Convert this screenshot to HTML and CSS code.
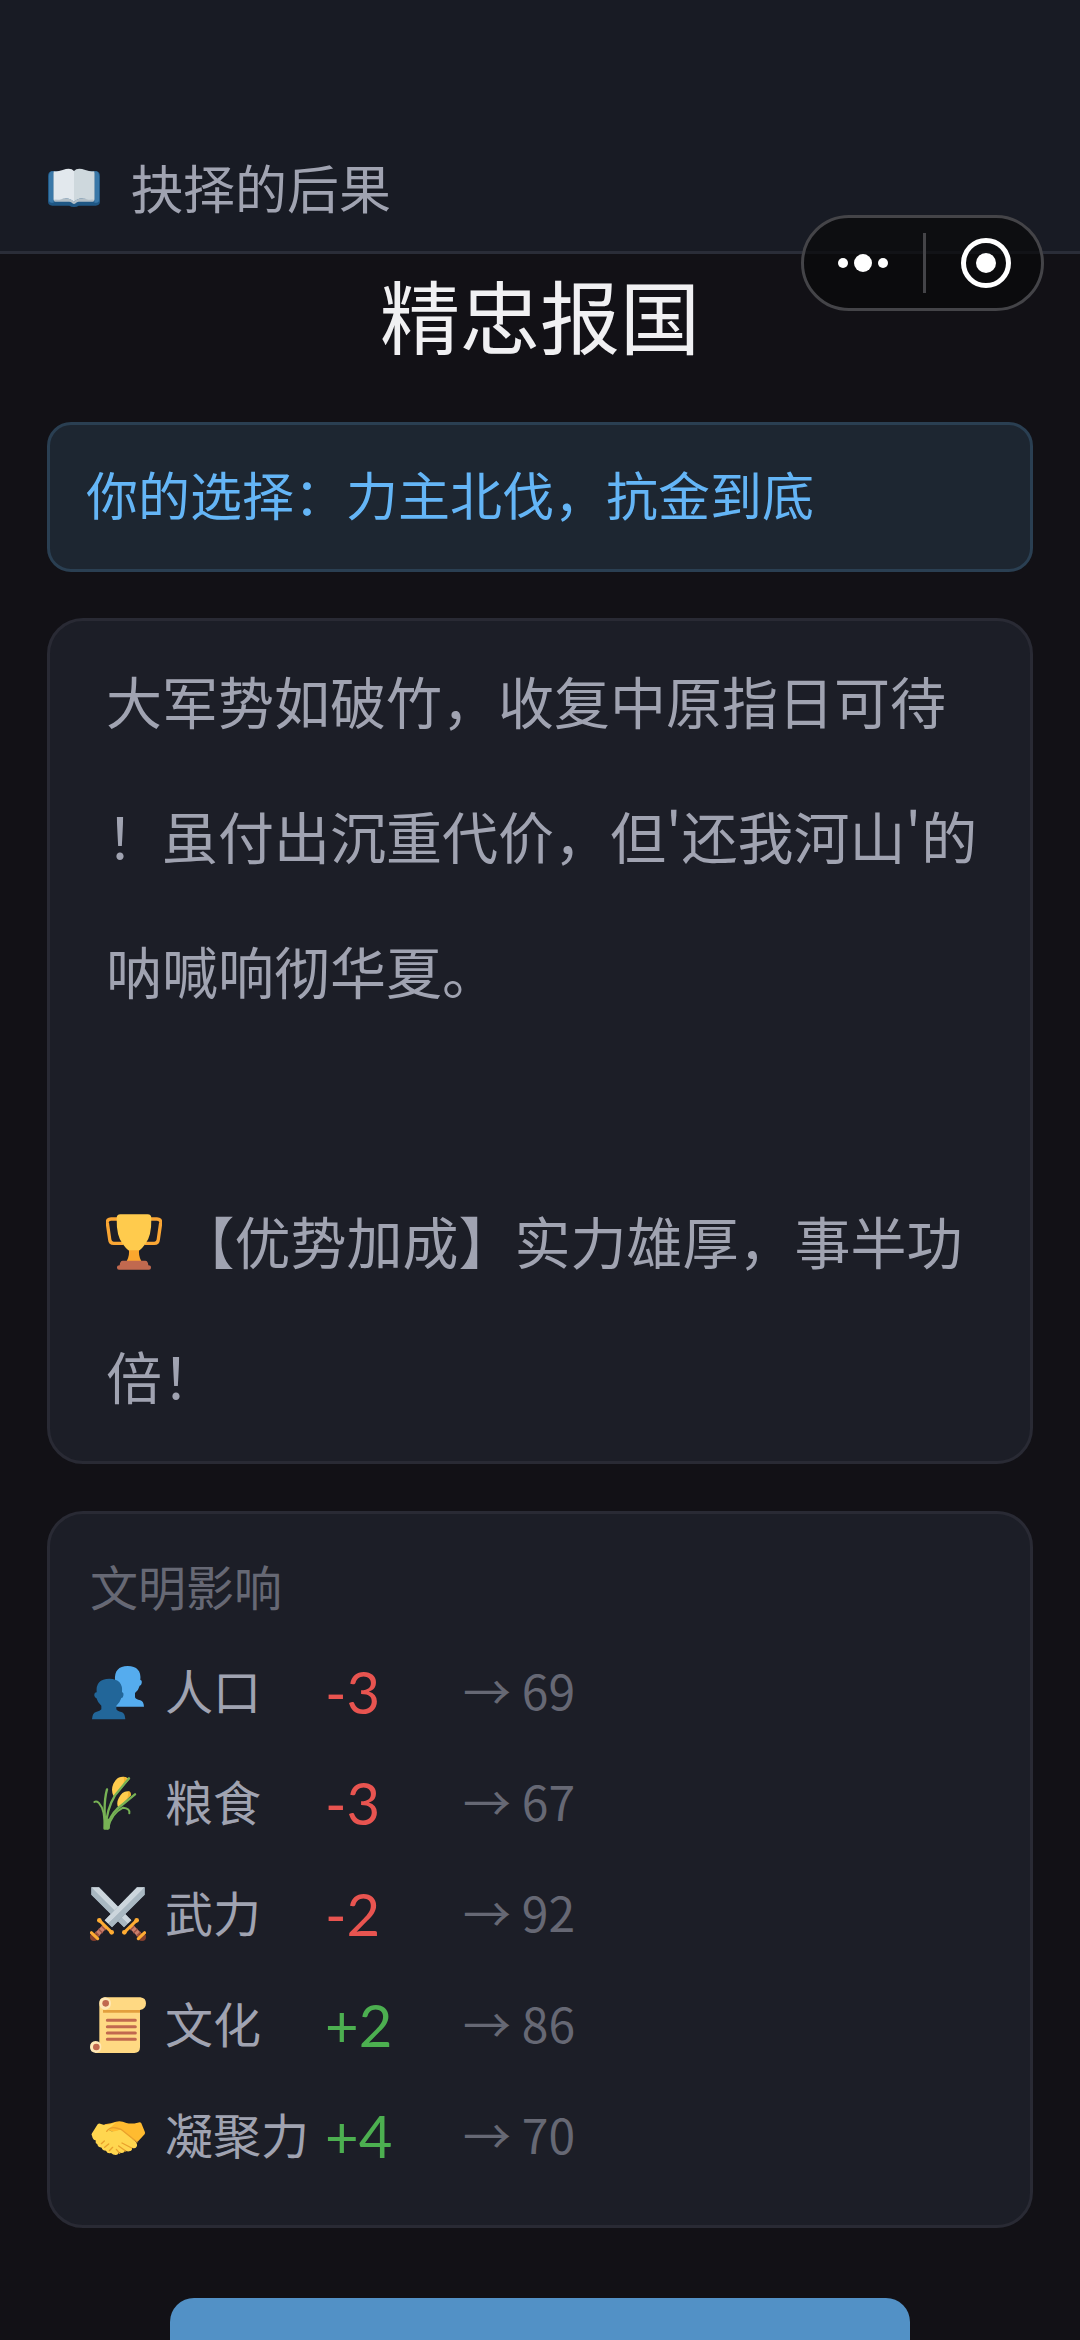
FILE: index.html
```html
<!DOCTYPE html>
<html lang="zh-CN">
  <head>
    <meta charset="UTF-8" />
    <meta name="viewport" content="width=device-width, initial-scale=1.0" />
    <title>抉择的后果</title>
    <link rel="stylesheet" href="styles.css">
  </head>
  <body>
    <header class="header">
      <svg class="header-icon" viewBox="144 93 156 156" aria-hidden="true">
        <path fill="#1f5784" d="M155 124h134q11 2 11 14v76q0 13-13 13h-51q-5 4-14 4t-14-4h-51q-13 0-13-13v-76q0-12 11-14z"/>
        <path fill="#3a78a8" d="M155 124h6v94h-6q-8 0-8-8v-72q0-12 8-14zM283 124h6q8 2 8 14v72q0 8-8 8h-6z"/>
        <path fill="#b3bfc7" d="M161 128l5-5v85l18-2q26-4 38 10 12-14 38-10l18 2v-85l5 5v83q0 4-5 4h-42q-6 0-9 5-5 4-10 0-3-5-9-5h-42q-5 0-5-4z"/>
        <path fill="#e2e8ed" d="M161 124q14 1 27-4 24-9 34 3v93q-14-14-33-10-15 5-28 3z"/>
        <path fill="#ced8dd" d="M283 124q-14 1-27-4-24-9-34 3v93q14-14 33-10 15 5 28 3z"/>
      </svg>
      <span>抉择的后果</span>
    </header>

    <!-- 右上角胶囊按钮 -->
    <div class="capsule">
      <button class="capsule-btn" aria-label="更多">
        <svg width="52" height="20" viewBox="0 0 52 20">
          <circle cx="6" cy="10" r="5"/><circle cx="26" cy="10" r="9"/><circle cx="46" cy="10" r="5"/>
        </svg>
      </button>
      <button class="capsule-btn" aria-label="关闭">
        <svg width="50" height="50" viewBox="0 0 50 50">
          <circle cx="25" cy="25" r="22.5" fill="none" stroke="#fff" stroke-width="5"/><circle cx="25" cy="25" r="10"/>
        </svg>
      </button>
    </div>

    <main class="content">
      <h1 class="title">精忠报国</h1>

      <div class="choice">你的选择：力主北伐，抗金到底</div>

      <section class="card story">
        <p>大军势如破竹，收复中原指日可待！虽付出沉重代价，但'还我河山'的呐喊响彻华夏。</p>
        <p class="bonus">
          <svg class="icon inline-icon" viewBox="138 103 168 168" aria-hidden="true">
            <g fill="none" stroke="#faa634" stroke-width="10" stroke-linejoin="round">
              <path d="M176 118h-23q-12 0-11 12l7 49q1 12 12 12h28"/>
              <path d="M268 118h23q12 0 11 12l-7 49q-1 12-12 12h-28"/>
            </g>
            <path fill="#fba72e" d="M206 207h32q-4 18 6 38h-44q10-20 6-38z"/>
            <path fill="#ffcb4d" d="M181 104h82q11 0 11 12 1 54-18 77-9 12-17 19h-34q-8-7-17-19-19-23-18-77 0-12 11-12z"/>
            <path fill="#c1694f" d="M188 243h68q8 0 9 14 8 0 8 7 0 6-6 6h-90q-6 0-6-6 0-7 8-7 1-14 9-14z"/>
          </svg>
          【优势加成】实力雄厚，事半功倍！
        </p>
      </section>

      <section class="card impact">
        <h2 class="impact-title">文明影响</h2>
        <ul class="stats">
          <li class="stat">
            <svg class="icon" viewBox="60 397 168 168" aria-hidden="true">
              <path fill="#55acee" d="M135 445q-3-41 38-42 42 1 38 42 6 1 4 10-1 7-6 7-4 15-14 22v13q2 6 16 9 10 3 11 19h-84z"/>
              <path fill="#226699" d="M80 482q-4-40 38-41 42 1 38 41 6 1 4 10-1 7-6 7-4 14-15 23v11q2 5 15 8 11 3 12 22h-100q1-19 12-22 13-3 16-8v-11q-11-9-15-23-4 0-6-7-1-9 7-10z"/>
            </svg>
            <span class="stat-name">人口</span>
            <span class="stat-change down">-3</span>
            <span class="stat-result">→ 69</span>
          </li>
          <li class="stat">
            <svg class="icon" viewBox="60 41 168 168" aria-hidden="true">
              <path fill="#ffcc4d" d="M130 103q-8-17 0-36 12-25 36-20l13 6-43 49zM145 138q-7-12 1-27 12-26 34-20l3 11-35 36z"/>
              <path fill="#f5b52e" d="M160 46q12 0 10 12l-10 11q4-15 0-23zM174 90q10 1 8 12l-10 8q4-12 2-20z"/>
              <g fill="none" stroke="#77b255" stroke-linecap="round">
                <path stroke-width="7" d="M107 202q-8-75 4-118M107 202q2-58 28-100l42-51M112 202q5-37 29-59l54-44"/>
                <path stroke-width="6" d="M103 202q4-55-17-78-7-6-13-2M114 202q9-45 45-63M159 139q22 2 19 17"/>
                <path stroke-width="9" d="M107 199v-30M115 199v-23"/>
              </g>
            </svg>
            <span class="stat-name">粮食</span>
            <span class="stat-change down">-3</span>
            <span class="stat-result">→ 67</span>
          </li>
          <li class="stat">
            <svg class="icon" viewBox="60 377 168 168" aria-hidden="true">
              <g id="sword">
                <path fill="#8899a6" d="M64 381h23l97 99-22 21-98-98z"/>
                <path fill="#ccd6dd" d="M64 381h23l97 99-11 10-100-98z"/>
                <path fill="#a9b8c2" d="M64 381l109 109-11 11-98-98z"/>
                <path stroke="#c97e6b" stroke-width="15" d="M182 497l29 29"/>
                <path stroke="#9d5143" stroke-width="4" d="M181 509l13-12M190 518l13-12M199 527l13-12"/>
                <circle cx="216" cy="530" r="12" fill="#853f2d"/>
                <path stroke="#ffac33" stroke-width="9" stroke-linecap="round" d="M163 516l37-36M205 535l19-18"/>
                <circle cx="163" cy="516" r="7" fill="#ffac33"/>
                <circle cx="200" cy="480" r="7" fill="#ffac33"/>
              </g>
              <use href="#sword" transform="translate(288 0) scale(-1 1)"/>
            </svg>
            <span class="stat-name">武力</span>
            <span class="stat-change down">-2</span>
            <span class="stat-result">→ 92</span>
          </li>
          <li class="stat">
            <svg class="icon" viewBox="60 78 168 168" aria-hidden="true">
              <path fill="#ffd983" d="M105 79h106q17 2 17 18 0 17-18 20v112q0 17-17 17H77V228l11-8V97q0-17 17-18z"/>
              <path fill="#e39f3d" d="M99 117h111v8H99z"/>
              <path fill="#ffe8b6" d="M105 79q18 2 18 18 0 17-18 19-17-2-17-19 0-16 17-18zM77 210q17 2 17 18 0 16-17 18-17-2-17-18 0-16 17-18z"/>
              <circle cx="107" cy="97" r="10" fill="#c1694f"/>
              <circle cx="79" cy="228" r="10" fill="#c1694f"/>
              <path stroke="#c1694f" stroke-width="9" stroke-linecap="round" d="M112 148h84M112 167h84M112 186h84M112 205h84"/>
            </svg>
            <span class="stat-name">文化</span>
            <span class="stat-change up">+2</span>
            <span class="stat-result">→ 86</span>
          </li>
          <li class="stat">
            <svg class="icon" viewBox="60 411 168 168" aria-hidden="true">
              <path fill="#ffbb30" d="M104 460q20-3 34-8 15-4 31 4 16 4 34-1 8-4 11 2l11 27q1 6-4 9l-18 19-50-20-52-20z"/>
              <path fill="#ffd64f" d="M83 460q4-4 10-1 13 5 28 1l17-6-18 17q-6 9 6 10 15 1 26-6l38 31q13 9 11 19-4 10-15 5 2 10-9 11-8 1-12-4 0 8-10 9-5 0-8-3-2 9-10 9-8 0-14-6-11 3-15-7-11 0-13-9-11 0-13-10-7-4-5-12-9-2-11-14-3-3 0-7z"/>
              <path fill="none" stroke="#e9a02c" stroke-width="4" stroke-linecap="round" d="M110 481q11-15 29-10 8 2 14 4l48 38M156 516l29 15M146 525l21 15M139 535l10 12M94 518l9-8M104 529l12-10M118 539l10-10"/>
            </svg>
            <span class="stat-name">凝聚力</span>
            <span class="stat-change up">+4</span>
            <span class="stat-result">→ 70</span>
          </li>
        </ul>
      </section>

      <button class="next-btn" aria-label="继续"></button>
    </main>
  </body>
</html>
```
FILE: styles.css
```css
* {
  box-sizing: border-box;
}

body {
  margin: 0;
  height: 100vh;
  overflow: hidden;
  background-color: #121116;
  color: #a0a3b1;
  font-family: "Noto Sans CJK SC", sans-serif;
}

h1,
h2,
p,
ul {
  margin: 0;
  padding: 0;
  font-weight: 400;
}

.header {
  display: flex;
  align-items: center;
  gap: 31px;
  padding: 148px 48px 25px;
  border-bottom: 3px solid #2a2d38;
  background-color: #181b24;
  font-size: 52px;
  line-height: 78px;
}

.header-icon {
  width: 52px;
  height: 52px;
}

.capsule {
  position: absolute;
  top: 215px;
  right: 36px;
  display: flex;
  width: 243px;
  height: 96px;
  border: 3px solid #444448;
  border-radius: 48px;
  background-color: rgba(8, 8, 10, 0.7);
}

.capsule-btn {
  display: flex;
  flex: 1;
  align-items: center;
  justify-content: center;
  padding: 0;
  border: none;
  background: none;
  fill: #fff;
}

/* 胶囊中间的分隔线 */
.capsule-btn + .capsule-btn::before {
  content: "";
  width: 3px;
  height: 60px;
  margin-right: 35px;
  background-color: #444448;
}

.capsule-btn + .capsule-btn {
  justify-content: flex-start;
}

.content {
  display: flex;
  flex-direction: column;
  padding: 11px 47px 0;
}

.title {
  margin-bottom: 61px;
  color: #f0f0f2;
  font-size: 80px;
  line-height: 96px;
  text-align: center;
}

.choice {
  margin-bottom: 46px;
  padding: 30px 36px 36px;
  border: 3px solid #2a3f52;
  border-radius: 24px;
  background-color: #1d2631;
  color: #64b5f6;
  font-size: 52px;
  line-height: 78px;
}

.card {
  border: 3px solid #292a34;
  border-radius: 36px;
  background-color: #1c1e27;
}

.story {
  margin-bottom: 47px;
  padding: 11px 40px 19px 56px;
  font-size: 56px;
  line-height: 135px;
  line-break: anywhere;
}

.bonus {
  margin-top: 135px;
}

.icon {
  flex: none;
  width: 56px;
  height: 56px;
}

.inline-icon {
  margin-right: 4px;
  vertical-align: -6px;
}

.impact {
  padding: 35px 40px 34px;
}

.impact-title {
  margin-bottom: 15px;
  color: #666874;
  font-size: 48px;
  line-height: 72px;
}

.stats {
  list-style: none;
}

.stat {
  display: flex;
  align-items: center;
  height: 111px;
}

.stat-name {
  width: 160px;
  margin-left: 19px;
  padding-bottom: 6px;
  font-size: 48px;
}

.stat-change {
  width: 138px;
  font-family: Lato, "Noto Sans CJK SC", sans-serif;
  font-size: 58px;
}

.stat-result {
  padding-bottom: 6px;
  color: #666874;
  font-size: 48px;
}

.up {
  color: #4caf50;
}

.down {
  color: #e85450;
}

.next-btn {
  width: 75%;
  height: 132px;
  margin: 70px auto 0;
  border: none;
  border-radius: 24px;
  background-color: #5291c6;
}
```
